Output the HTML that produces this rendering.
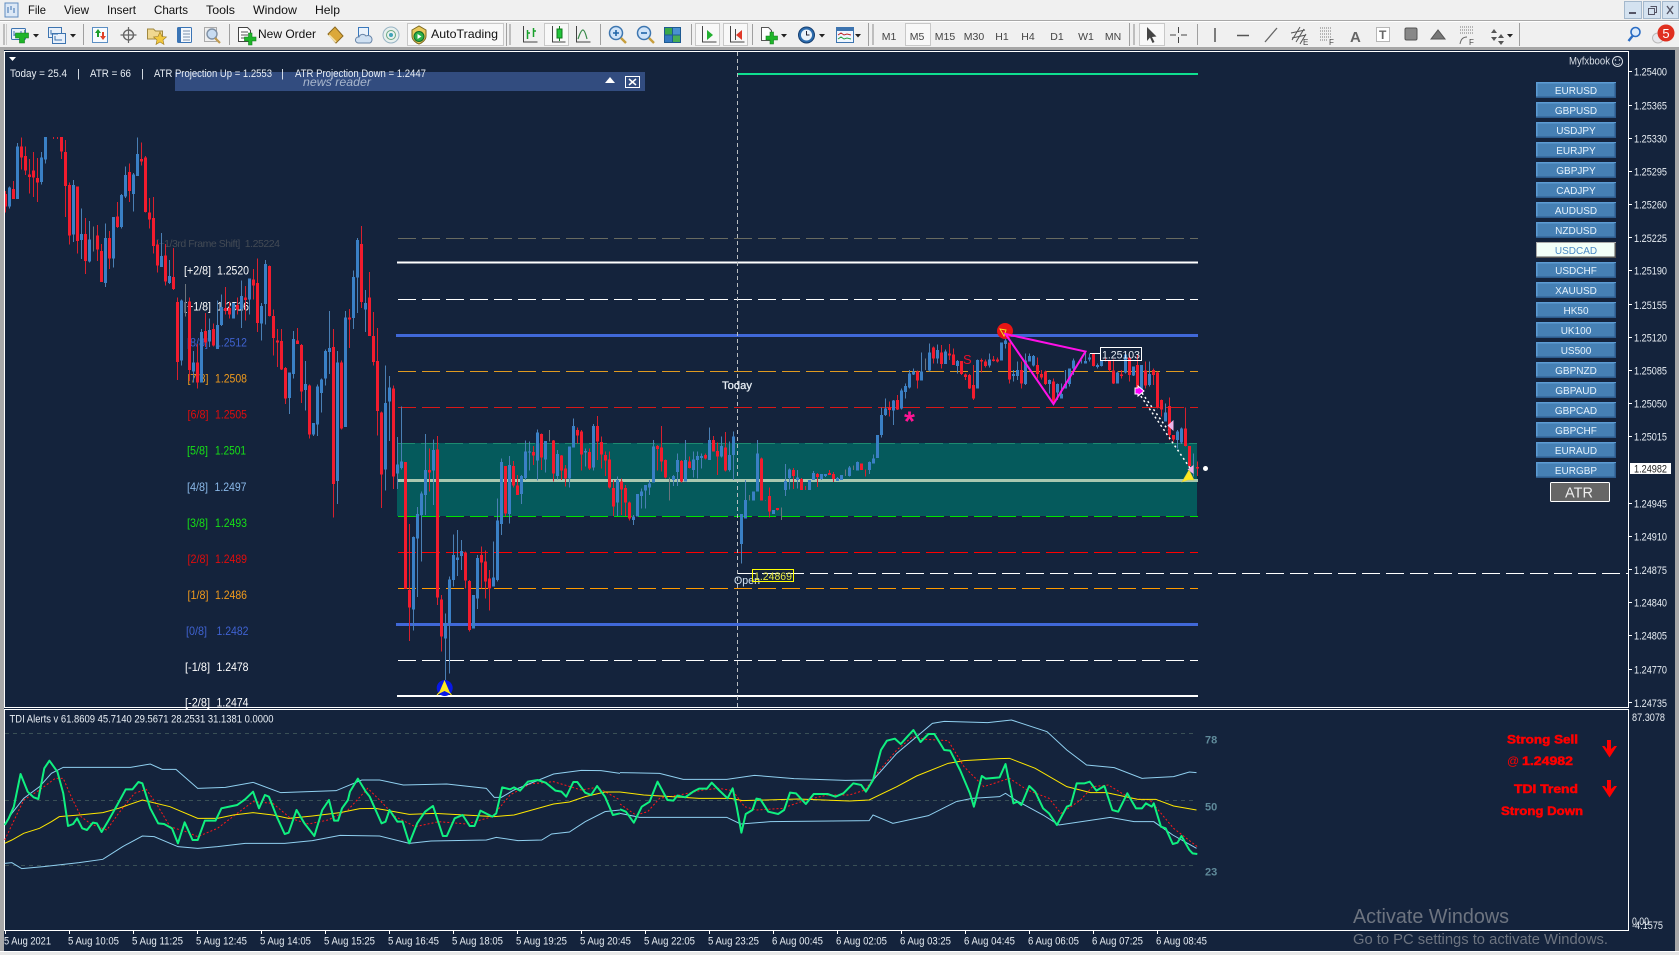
<!DOCTYPE html>
<html><head><meta charset="utf-8"><title>MT4</title>
<style>
html,body{margin:0;padding:0;background:#14233c;width:1679px;height:955px;overflow:hidden}
svg{display:block}
text{font-family:"Liberation Sans",sans-serif}
.m{font-size:12px;fill:#111}
.t{font-size:10.5px;fill:#444;text-anchor:middle}
.a{font-size:11px;fill:#e8eef4}
.x{font-size:11px;fill:#e8eef4}
.b{font-size:10px;fill:#e6f2fc;text-anchor:middle}
.l{font-size:12px}
</style></head><body>
<svg width="1679" height="955" viewBox="0 0 1679 955" xmlns="http://www.w3.org/2000/svg">
<rect width="1679" height="955" fill="#14233c"/>
<!-- chrome -->
<rect width="1679" height="48" fill="#f0f0f0"/>
<rect y="20" width="1679" height="1" fill="#a8a8a8"/>
<rect y="21" width="1679" height="1" fill="#fff"/>
<rect y="47" width="1679" height="3" fill="#a6a6a6"/>
<rect x="0" y="48" width="4" height="907" fill="#a8a8a8"/>
<rect x="1675" y="48" width="4" height="907" fill="#a8a8a8"/>
<rect y="952" width="1679" height="3" fill="#e8e8e8"/>
<rect y="951" width="1679" height="1" fill="#fff"/>
<!-- app icon -->
<rect x="5" y="3" width="13" height="14" fill="#dce8f6" stroke="#5f8cc0"/>
<path d="M8 7v6M11 6v4M14 8v5" stroke="#3b6fb0" fill="none"/>
<!-- menu -->
<text class="m" x="28" y="14" textLength="18" lengthAdjust="spacingAndGlyphs">File</text>
<text class="m" x="64" y="14" textLength="25" lengthAdjust="spacingAndGlyphs">View</text>
<text class="m" x="107" y="14" textLength="29" lengthAdjust="spacingAndGlyphs">Insert</text>
<text class="m" x="154" y="14" textLength="34" lengthAdjust="spacingAndGlyphs">Charts</text>
<text class="m" x="206" y="14" textLength="29" lengthAdjust="spacingAndGlyphs">Tools</text>
<text class="m" x="253" y="14" textLength="44" lengthAdjust="spacingAndGlyphs">Window</text>
<text class="m" x="315" y="14" textLength="25" lengthAdjust="spacingAndGlyphs">Help</text>
<!-- window buttons -->
<g>
<rect x="1624.5" y="1.5" width="17" height="17" fill="#d4e2f0" stroke="#a4b8cc"/>
<rect x="1643.5" y="1.5" width="17" height="17" fill="#d4e2f0" stroke="#a4b8cc"/>
<rect x="1662.5" y="1.5" width="16" height="17" fill="#d4e2f0" stroke="#a4b8cc"/>
<rect x="1629" y="12" width="7" height="2" fill="#556"/>
<path d="M1650.5 6.5h6v6h-2M1648.5 8.5h6v6h-6z" fill="none" stroke="#556"/>
<path d="M1667 6l6 8M1673 6l-6 8" stroke="#556" stroke-width="1.4"/>
</g>
<!-- toolbar grips & separators -->
<g fill="#a8a8a8">
<rect x="3" y="24" width="2" height="21" opacity=".7"/><rect x="6" y="24" width="1" height="21" opacity=".5"/>
<rect x="509" y="24" width="2" height="21" opacity=".7"/>
<rect x="872" y="24" width="2" height="21" opacity=".7"/>
<rect x="1133" y="24" width="2" height="21" opacity=".7"/>
</g>
<g fill="#a0a0a0">
<rect x="83" y="24" width="1" height="21"/><rect x="229" y="24" width="1" height="21"/><rect x="506" y="23" width="1" height="23"/>
<rect x="600" y="24" width="1" height="21"/><rect x="691" y="24" width="1" height="21"/><rect x="752" y="24" width="1" height="21"/>
<rect x="868" y="23" width="1" height="23"/><rect x="1129" y="23" width="1" height="23"/><rect x="1197" y="24" width="1" height="21"/><rect x="1519" y="23" width="1" height="23"/>
</g>
<!-- new chart -->
<g>
<rect x="11.5" y="28.5" width="14" height="11" rx="1" fill="#e8f0fa" stroke="#3d74b0"/>
<path d="M14 31v5M14 35h8M21 31v4" stroke="#3d74b0" fill="none"/>
<path d="M19.5 33h5v-3h0v3h4v5h-4v5h-5v-5h-4v-5h4z" fill="#1fb52a" stroke="#0f7a1c" stroke-width=".6"/>
<path d="M33 34h6l-3 3.5z" fill="#222"/>
<rect x="48.5" y="27.5" width="13" height="10" fill="#e8f0fa" stroke="#3d74b0"/>
<rect x="52.5" y="33.5" width="13" height="10" fill="#e8f0fa" stroke="#3d74b0"/>
<path d="M51 30v4h7M55 36v4h7" fill="none" stroke="#3d74b0"/>
<path d="M70 34h6l-3 3.5z" fill="#222"/>
<!-- market watch -->
<rect x="92.5" y="27.5" width="15" height="15" fill="#f8fbff" stroke="#5c8fc4"/>
<path d="M97 37v-4h-2l3-4 3 4h-2v4z" fill="#1c9e2c"/><path d="M102 32v4h-2l3 4 3-4h-2v-4z" fill="#e04028"/>
<!-- crosshair -->
<circle cx="128.5" cy="35" r="5" fill="none" stroke="#666" stroke-width="1.4"/>
<path d="M128.5 27v16M120.5 35h16" stroke="#666" stroke-width="1.2"/>
<!-- folder star -->
<path d="M147.500 29h6l2 2h7v8h-15z" fill="#f0d890" stroke="#a08840"/>
<path d="M160 32l2 4.500 4.500.5-3.500 3 1 4.500-4-2.500-4 2.500 1-4.500-3.500-3 4.500-.5z" fill="#f2c83e" stroke="#9c7a20" stroke-width=".6"/>
<!-- terminal -->
<rect x="177.500" y="27.500" width="14" height="15" rx="1" fill="#f4f8fd" stroke="#3a74b5"/>
<rect x="178" y="28" width="3" height="14" fill="#3a74b5"/>
<path d="M183 31h7M183 34h7M183 37h7M183 40h7" stroke="#7a90aa"/>
<!-- strategy tester -->
<rect x="204.500" y="27.500" width="12" height="14" fill="#eee" stroke="#aaa"/>
<circle cx="212" cy="34" r="5" fill="#c8dcf2" stroke="#7f90a4" stroke-width="1.4"/>
<path d="M215 38l5 5" stroke="#c09a50" stroke-width="2.2"/>
<!-- new order -->
<path d="M238.500 27.500h9l3 3v11h-12z" fill="#fff" stroke="#444"/>
<path d="M241 32h7M241 35h7M241 38h4" stroke="#555"/>
<path d="M247.500 36h3.500v4h4v4h-4v4h-3.500v-4h-4v-4h4z" transform="translate(1,-3)" fill="#1fb52a" stroke="#0f7a1c" stroke-width=".6"/>
<text x="258" y="38" font-size="12" fill="#111" textLength="58" lengthAdjust="spacingAndGlyphs">New Order</text>
<!-- gold book -->
<path d="M335 27l8 9-7 7-8-9z" fill="#dba83a" stroke="#8d6a20"/>
<path d="M329 35l7 7" stroke="#f3e0a8" stroke-width="1.6"/>
<!-- cloud doc -->
<rect x="358.500" y="27.500" width="10" height="10" fill="#eaf2fb" stroke="#3a78bc"/>
<path d="M358 43a3 3 0 0 1 1-6 4 4 0 0 1 7-1 3.500 3.500 0 0 1 4 7z" fill="#cfe0f2" stroke="#6a86a8"/>
<!-- signals -->
<circle cx="391" cy="35" r="8" fill="#e8f0ee" stroke="#98b4c4"/>
<circle cx="391" cy="35" r="4.500" fill="none" stroke="#6aa880"/>
<circle cx="391" cy="35" r="2" fill="#3fa3b8"/>
<!-- autotrading -->
<rect x="407.500" y="23.500" width="96" height="22" fill="#f8f8f8" stroke="#c8c8c8"/>
<path d="M412 30l7-4 7 4v6c0 4-4 7-7 8-3-1-7-4-7-8z" fill="#e8c85a" stroke="#7d6a22"/>
<circle cx="419" cy="36.500" r="5" fill="#2db04a" stroke="#126a28"/>
<path d="M417.500 34l4 2.500-4 2.500z" fill="#fff"/>
<text x="431" y="38" font-size="12" fill="#111" textLength="67" lengthAdjust="spacingAndGlyphs">AutoTrading</text>
<!-- chart types -->
<rect x="544.500" y="23.500" width="24" height="22" fill="#f8f8f8" stroke="#c8c8c8"/>
<g fill="none" stroke="#444">
<path d="M523.500 26v16h14M576.500 26v16h14M552.500 26v16h13" stroke-width="1"/>
<path d="M527.500 30v9M530 33h-2.500M533.500 28v9M533.500 31h2.500" stroke="#17a02a" stroke-width="1.500"/>
<path d="M578 39c4-12 6-12 9 0" stroke="#3a8a4a" stroke-width="1.200"/>
</g>
<rect x="557" y="29" width="5" height="9" fill="#22c33a" stroke="#0f7a1c"/>
<path d="M559.500 26v3M559.500 38v3" stroke="#0f7a1c"/>
<!-- zoom -->
<circle cx="616" cy="33" r="6.500" fill="#cfe3f8" stroke="#3d76b0" stroke-width="1.500"/>
<path d="M613 33h6M616 30v6" stroke="#1e64a8" stroke-width="1.600"/>
<path d="M621 38l5 5" stroke="#c79e3c" stroke-width="2.400"/>
<circle cx="644" cy="33" r="6.500" fill="#cfe3f8" stroke="#3d76b0" stroke-width="1.500"/>
<path d="M641 33h6" stroke="#1e64a8" stroke-width="1.600"/>
<path d="M649 38l5 5" stroke="#c79e3c" stroke-width="2.400"/>
<!-- tile -->
<rect x="664.500" y="27.500" width="16" height="7.500" fill="#3aa84a" stroke="#1e5a92"/>
<rect x="664.500" y="35" width="16" height="7.500" fill="#3579c0" stroke="#1e5a92"/>
<path d="M672.500 27v15" stroke="#1e5a92"/><rect x="673" y="28" width="7" height="6.500" fill="#4a90d0"/><rect x="673" y="35.500" width="7" height="6.500" fill="#48ad55"/>
<!-- autoscroll / shift -->
<rect x="695.500" y="23.500" width="24" height="22" fill="#f8f8f8" stroke="#c8c8c8"/>
<rect x="723.500" y="23.500" width="24" height="22" fill="#f8f8f8" stroke="#c8c8c8"/>
<path d="M702.500 26v16h14M730.500 26v16h14" fill="none" stroke="#444"/>
<path d="M707 30l6 5-6 5z" fill="#22b030"/><path d="M742 30l-6 5 6 5z" fill="#e03828"/><path d="M735.500 29v11" stroke="#444"/>
<!-- indicators -->
<path d="M761.500 27.500h7l3 3v10h-10z" fill="#fff" stroke="#555"/>
<path d="M770 35h3.500v4h4v4h-4v4h-3.500v-4h-4v-4h4z" transform="translate(0,-3)" fill="#1fb52a" stroke="#0f7a1c" stroke-width=".6"/>
<path d="M781 34h6l-3 3.500z" fill="#222"/>
<!-- clock -->
<circle cx="806.500" cy="35" r="8" fill="#2c6cae" stroke="#173f70"/>
<circle cx="806.500" cy="35" r="5.500" fill="#eaf2fa"/>
<path d="M806.500 31v4h3" stroke="#223" fill="none"/>
<path d="M819 34h6l-3 3.500z" fill="#222"/>
<!-- templates -->
<rect x="836.500" y="27.500" width="17" height="15" fill="#eef6ff" stroke="#3d74b0"/>
<rect x="837" y="28" width="16" height="3" fill="#3d74b0"/>
<path d="M838 35l3-2 3 2 3-1 4 1" stroke="#c02828" fill="none"/><path d="M838 39l3-2 3 2 3-1 4 1" stroke="#28a040" fill="none"/>
<path d="M855 34h6l-3 3.500z" fill="#222"/>
<!-- timeframes -->
<rect x="905.500" y="23.500" width="25" height="22" fill="#f8f8f8" stroke="#c8c8c8"/>
<text class="t" x="889" y="40">M1</text><text class="t" x="917" y="40">M5</text><text class="t" x="945" y="40">M15</text><text class="t" x="974" y="40">M30</text>
<text class="t" x="1002" y="40">H1</text><text class="t" x="1028" y="40">H4</text><text class="t" x="1057" y="40">D1</text><text class="t" x="1086" y="40">W1</text><text class="t" x="1113" y="40">MN</text>
<!-- draw tools -->
<rect x="1139.500" y="23.500" width="25" height="22" fill="#f8f8f8" stroke="#c8c8c8"/>
<path d="M1147 27l0 14 3-3.500 2.500 5.500 2-1-2.500-5 4.500-.5z" fill="#444"/>
<path d="M1178.500 27v6M1178.500 37v6M1170 35h6M1181 35h6" stroke="#444"/>
<path d="M1215 28v14" stroke="#555" stroke-width="1.500"/>
<path d="M1237 35.500h12" stroke="#555" stroke-width="1.500"/>
<path d="M1265 42l12-14" stroke="#666" stroke-width="1.300"/>
<g fill="none" stroke="#555"><path d="M1292 40l8-13M1296 42l8-13M1300 44l6-10M1291 33l14-3M1292 38l14-3"/></g>
<text x="1303" y="45" font-size="8" fill="#444">E</text>
<path d="M1320 28h12M1320 31h12M1320 34h12M1320 37h12" stroke="#777" stroke-dasharray="1 1"/><path d="M1320 40h8" stroke="#777" stroke-dasharray="1 1"/>
<text x="1329" y="45" font-size="8" fill="#444">F</text>
<text x="1350" y="42" font-size="15" font-weight="bold" fill="#666">A</text>
<rect x="1376.500" y="27.500" width="13" height="14" fill="#fff" stroke="#777" stroke-dasharray="1 1"/>
<text x="1379" y="39" font-size="12" font-weight="bold" fill="#666">T</text>
<rect x="1405" y="28" width="12" height="12" rx="1.500" fill="#888" stroke="#555"/>
<path d="M1431 39l7-9 7 9z" fill="#777" stroke="#555"/>
<path d="M1460 27h14M1460 30h14M1460 33h14" stroke="#777" stroke-dasharray="1 1"/><path d="M1460 44c1-5 3-7 7-7" stroke="#666" fill="none"/>
<text x="1469" y="45" font-size="8" fill="#444">F</text>
<path d="M1491 33l3-4 3 4zM1491 37l3 4 3-4zM1498 38l3-4 3 4zM1498 41l3 4 3-4z" fill="#555"/>
<path d="M1507 34h6l-3 3.500z" fill="#222"/>
<!-- search, notify -->
<circle cx="1635.500" cy="32" r="4.500" fill="#dbeafa" stroke="#2a6cc4" stroke-width="1.600"/>
<path d="M1632.500 36l-4 5" stroke="#2a6cc4" stroke-width="2.400"/>
<ellipse cx="1658" cy="38" rx="5.500" ry="5" fill="#e8e8ec" stroke="#bbb"/>
<circle cx="1666" cy="33" r="8.500" fill="#e03020"/>
<text x="1666" y="38" font-size="13" fill="#fff" text-anchor="middle">5</text>

<!-- CHART -->
<rect x="397" y="443" width="800" height="73" fill="#055a5c"/>
<path d="M397 443.500H1197" stroke="#1c8a70" stroke-dasharray="18 6"/>
<path d="M738 74H1198" stroke="#0fe090" stroke-width="2"/>
<g fill="none">
<path d="M398 238.500H1198" stroke="#686a60" stroke-dasharray="18 6"/>
<path d="M397 262.500H1198" stroke="#fff" stroke-width="2"/>
<path d="M398 299.500H1198" stroke="#fff" stroke-dasharray="18 6"/>
<path d="M396 335.500H1198" stroke="#4068d8" stroke-width="3"/>
<path d="M398 371.500H1198" stroke="#e09a20" stroke-dasharray="18 6"/>
<path d="M398 407.500H1198" stroke="#d81818" stroke-dasharray="18 6"/>
<path d="M397 480.500H1198" stroke="#a8c8b0" stroke-width="3"/>
<path d="M398 516.500H1198" stroke="#00e000" stroke-width="1" stroke-dasharray="18 6"/>
<path d="M398 552.500H1198" stroke="#ff0000" stroke-dasharray="18 6"/>
<path d="M398 588.500H1198" stroke="#ff9a00" stroke-dasharray="18 6"/>
<path d="M396 624.500H1198" stroke="#4068d8" stroke-width="3"/>
<path d="M398 660.500H1198" stroke="#fff" stroke-dasharray="18 6"/>
<path d="M397 696H1198" stroke="#fff" stroke-width="2"/>
<path d="M738 573.500H1628" stroke="#fff" stroke-dasharray="18 6"/>
<path d="M737.500 52V707" stroke="#b8bcc0" stroke-dasharray="4 3"/>
</g>
<!-- labels left -->
<g class="l">
<text x="156" y="247" font-size="10.500" fill="#444b55" textLength="124" lengthAdjust="spacing">[+1/3rd Frame Shift]&#160; 1.25224</text>
<g font-size="12">
<text x="184" y="274.500" fill="#fff" textLength="27" lengthAdjust="spacingAndGlyphs">[+2/8]</text><text x="217" y="274.500" fill="#fff" textLength="32" lengthAdjust="spacingAndGlyphs">1.2520</text>
<text x="184" y="310.500" fill="#fff" textLength="27" lengthAdjust="spacingAndGlyphs">[+1/8]</text><text x="217" y="310.500" fill="#fff" textLength="32" lengthAdjust="spacingAndGlyphs">1.2516</text>
<text x="187" y="346.500" fill="#3f62d0" textLength="21" lengthAdjust="spacingAndGlyphs">[8/8]</text><text x="215" y="346.500" fill="#3f62d0" textLength="32" lengthAdjust="spacingAndGlyphs">1.2512</text>
<text x="187.500" y="382.500" fill="#f09a1c" textLength="21" lengthAdjust="spacingAndGlyphs">[7/8]</text><text x="215" y="382.500" fill="#f09a1c" textLength="32" lengthAdjust="spacingAndGlyphs">1.2508</text>
<text x="187.500" y="418.500" fill="#e00c0c" textLength="21" lengthAdjust="spacingAndGlyphs">[6/8]</text><text x="215" y="418.500" fill="#e00c0c" textLength="32" lengthAdjust="spacingAndGlyphs">1.2505</text>
<text x="187" y="454.500" fill="#16e016" textLength="21" lengthAdjust="spacingAndGlyphs">[5/8]</text><text x="215" y="454.500" fill="#16e016" textLength="31" lengthAdjust="spacingAndGlyphs">1.2501</text>
<text x="187" y="491" fill="#8ab8e8" textLength="21" lengthAdjust="spacingAndGlyphs">[4/8]</text><text x="214.500" y="491" fill="#8ab8e8" textLength="32" lengthAdjust="spacingAndGlyphs">1.2497</text>
<text x="187" y="527" fill="#16e016" textLength="21" lengthAdjust="spacingAndGlyphs">[3/8]</text><text x="215" y="527" fill="#16e016" textLength="32" lengthAdjust="spacingAndGlyphs">1.2493</text>
<text x="187.500" y="563" fill="#e00c0c" textLength="21" lengthAdjust="spacingAndGlyphs">[2/8]</text><text x="215" y="563" fill="#e00c0c" textLength="32" lengthAdjust="spacingAndGlyphs">1.2489</text>
<text x="187.500" y="599" fill="#f09a1c" textLength="21" lengthAdjust="spacingAndGlyphs">[1/8]</text><text x="215" y="599" fill="#f09a1c" textLength="32" lengthAdjust="spacingAndGlyphs">1.2486</text>
<text x="186" y="635" fill="#3f62d0" textLength="21" lengthAdjust="spacingAndGlyphs">[0/8]</text><text x="216.500" y="635" fill="#3f62d0" textLength="32" lengthAdjust="spacingAndGlyphs">1.2482</text>
<text x="185" y="671" fill="#fff" textLength="25" lengthAdjust="spacingAndGlyphs">[-1/8]</text><text x="216.500" y="671" fill="#fff" textLength="32" lengthAdjust="spacingAndGlyphs">1.2478</text>
<text x="185" y="706.500" fill="#fff" textLength="25" lengthAdjust="spacingAndGlyphs">[-2/8]</text><text x="216.500" y="706.500" fill="#fff" textLength="32" lengthAdjust="spacingAndGlyphs">1.2474</text>
</g></g>

<!-- candles group 1 (zoom3 coords) -->
<svg x="0" y="52" width="1628" height="655" viewBox="0 52 1628 655">
<g transform="translate(.17,110) scale(.33333,.38265)" fill="none" shape-rendering="crispEdges">
<path stroke="#d8202e" stroke-width="3" d="M16 212V268M40 186V232M64 72V155M76 95V170M88 128V218M100 110V228M112 125V240M160 70V76M172 70V76M184 70V128M196 78V280M208 190V352M232 200V375M256 282V428M292 300V395M304 350V450M328 316V415M352 240V308M388 140V240M424 85V145M436 120V268M448 230V310M460 228V375M472 340V425M496 350V458M520 360V470M532 490V706M568 490V708M592 612V728M616 530V620M640 558V618M676 462V535M688 500V545M712 490V535M736 460V550M760 415V495M772 388V580M808 406V540M820 522V642M832 572V672M844 572V680M856 672V768M892 570V612M904 612V766M928 718V858M1000 572V1065M1024 655V835M1048 520V622M1084 303V518M1108 423V590M1120 528V668M1132 570V850M1144 788V1040M1180 720V990M1228 1082V1388"/>
<path stroke="#4a7fb4" stroke-width="3" d="M28 200V258M52 86V232M124 110V195M136 70V140M220 183V345M244 258V390M268 290V398M316 296V462M340 280V412M364 220V310M376 148V230M400 165V265M412 72V172M484 322V410M508 392V455M544 495V668M580 630V712M604 572V712M628 545V620M652 498V625M664 482V565M700 505V545M724 445V570M748 440V535M784 505V603M796 392V560M868 686V795M880 578V702M916 656V785M940 818V852M952 718V852M964 702V790M976 626V720M988 525V690M1012 630V1030M1036 525V828M1060 420V572M1072 335V530M1096 470V580M1156 668V995M1168 695V865M1192 855V990M1204 775V940M1240 1115V1360M1252 1038V1273"/>
<path stroke="#6c747c" stroke-width="3" d="M280 304V370M556 455V540"/>
<path stroke="#f21c2e" stroke-width="9" d="M16 220V252M40 206V232M64 95V124M76 120V158M88 168V175M100 158V176M112 178V190M184 70V108M196 110V198M208 196V328M232 200V342M256 324V395M292 328V365M304 368V450M328 335V388M352 278V306M388 162V212M424 128V135M436 124V266M448 268V286M460 282V356M472 352V406M496 380V448M520 437V468M532 502V658M568 500V680M592 660V712M616 578V608M640 572V616M676 518V525M688 518V535M712 510V522M736 490V496M760 443V458M772 452V556M808 408V538M820 538V596M832 603V608M844 604V678M856 674V754M892 602V611M904 614V736M928 720V848M1000 620V978M1024 660V832M1048 542V548M1084 350V502M1108 490V590M1120 590V658M1132 656V786M1144 790V952M1180 728V958M1216 920V1252M1228 1255V1300"/>
<path stroke="#3a80c6" stroke-width="9" d="M28 202V252M52 95V232M124 124V188M136 70V130M220 196V326M244 324V340M268 338V396M316 335V452M340 280V388M364 222V306M376 170V226M400 168V220M412 115V172M484 382V410M508 434V452M544 498V655M580 660V684M604 580V712M628 575V605M652 562V625M664 515V562M700 505V545M724 486V522M748 440V495M784 512V558M796 402V507M868 686V752M880 598V690M916 716V732M940 818V848M952 722V822M964 704V740M976 630V702M988 622V632M1012 660V970M1036 542V828M1060 436V544M1072 340V438M1096 505V522M1156 766V940M1168 725V762M1192 926V950M1204 918V936M1240 1116V1306M1252 1056V1120"/>
</g>
<!-- candles group 2 (zoom4 coords) -->
<g transform="translate(380.17,400) scale(.33333)" fill="none" shape-rendering="crispEdges">
<path stroke="#d8202e" stroke-width="3" d="M148 145V275M172 108V615M184 585V755M256 455V565M268 540V695M304 440V565M316 452V595M328 510V632M376 198V350M400 183V262M412 225V285M460 138V195M484 100V210M520 120V245M544 165V240M556 195V260M592 82V130M604 90V212M628 145V210M652 48V180M664 110V205M676 155V228M688 155V265M700 240V348M724 235V345M736 255V348M748 305V362M832 135V212M844 78V215M856 178V235M904 180V248M928 170V206M976 160V178M1000 108V155M1012 128V225M1036 96V215M1144 172V302M1168 262V352M1192 324V332"/>
<path stroke="#4a7fb4" stroke-width="3" d="M124 275V485M136 102V345M160 118V315M196 640V840M208 530V820M220 403V560M232 390V528M244 420V510M280 585V686M292 465V627M340 425V560M352 295V545M364 175V405M388 168V370M424 225V312M436 122V240M448 125V212M472 88V242M496 125V218M532 150V238M568 140V263M580 55V143M616 145V200M640 72V212M712 230V348M760 345V375M772 282V350M784 265V325M796 255V325M808 240V285M820 120V248M880 225V258M892 160V258M916 120V245M940 155V232M952 155V235M964 160V205M988 82V180M1024 110V172M1048 125V215M1060 95V240M1084 342V490M1096 240V356M1120 274V302M1132 120V275M1180 330V342M1216 192V288M1228 205V268M1252 210V265"/>
<path stroke="#6c747c" stroke-width="3" d="M508 90V125M868 232V302M1108 285V302M1156 300V302M1204 322V360"/>
<path stroke="#f21c2e" stroke-width="9" d="M148 210V218M172 148V592M184 598V710M256 458V542M268 543V690M304 465V488M316 484V545M328 535V565M376 198V340M400 198V257M412 256V285M460 156V166M484 102V172M520 122V220M544 166V212M556 205V235M592 90V106M604 94V164M628 156V206M652 78V125M664 126V164M676 165V182M688 178V263M700 264V320M724 244V268M736 264V308M748 307V355M832 138V147M844 142V185M856 180V233M904 183V245M928 184V204M976 165V176M1000 120V155M1012 153V170M1036 142V212M1144 175V302M1168 288V335M1192 324V330"/>
<path stroke="#3a80c6" stroke-width="9" d="M124 280V345M136 210V285M160 150V212M196 670V716M208 538V670M220 465V540M232 472V480M244 453V468M280 585V686M292 474V595M340 532V560M352 362V540M364 186V372M388 195V342M424 228V282M436 155V234M448 155V158M472 98V182M496 123V178M532 162V228M568 140V236M580 78V143M616 153V158M640 78V203M712 240V308M760 350V360M772 282V350M784 274V288M796 255V272M808 250V262M820 140V248M880 228V240M892 180V216M916 180V245M940 178V210M952 168V180M964 168V174M988 120V180M1024 138V170M1048 165V210M1060 110V165M1084 342V432M1096 300V356M1120 274V302M1132 160V275M1180 330V342M1216 243V270M1228 208V234M1252 232V240"/>
</g>
<!-- candles group 3 (true px) -->
<g fill="none" shape-rendering="crispEdges">
<path stroke="#d8202e" d="M793.500 468V489M801.500 478V490M805.500 486V490M817.500 473V487M829.500 470V475M833.500 472V482"/>
<path stroke="#4a7fb4" d="M813.500 471V480M821.500 474V480M825.500 474V477M837.500 477V481"/>
<path stroke="#f21c2e" stroke-width="3" d="M793.500 470V476M801.500 479V490M817.500 474V477M829.500 473V475M833.500 474V479"/>
<path stroke="#3a80c6" stroke-width="3" d="M809.500 480V490M813.500 473V480M821.500 474V479M825.500 474V476M837.500 478V481"/>
</g>
<!-- candles group 4 (zoom5 coords) -->
<g transform="translate(840.17,320) scale(.33333)" fill="none" shape-rendering="crispEdges">
<path stroke="#d8202e" stroke-width="3" d="M64 430V450M76 448V470M148 245V290M172 225V270M232 152V205M280 80V130M304 75V145M328 72V120M340 85V135M364 125V165M376 160V180M388 162V207M400 135V240M424 115V158M436 118V142M460 108V125M472 112V128M508 68V190M544 125V205M592 112V175M604 150V178M616 152V195M640 175V252M760 100V140M796 115V125M808 120V155M820 118V192M844 150V175M868 100V185M892 105V205M916 125V205M940 145V195M952 155V265M964 238V290M988 232V360M1000 345V365M1036 262V380M1048 378V440M1072 425V468"/>
<path stroke="#4a7fb4" stroke-width="3" d="M4 465V480M28 438V470M52 425V452M88 425V462M100 403V430M112 345V414M124 262V352M136 235V288M160 240V315M184 205V268M196 190V235M208 150V205M220 145V165M244 98V155M268 70V155M292 73V130M316 88V132M352 120V160M412 118V205M448 100V142M484 68V122M496 55V85M520 150V185M532 125V180M556 100V195M568 100V125M580 105V140M628 178V220M652 190V240M664 190V235M676 150V200M688 145V200M700 115V165M724 120V130M736 95V130M748 100V125M772 130V145M784 120V140M832 155V190M856 100V160M880 140V168M904 135V215M928 125V200M976 250V305M1012 330V385M1024 322V372M1060 400V470"/>
<path stroke="#6c747c" stroke-width="3" d="M16 448V468M40 437V450M256 115V150"/>
<path stroke="#f21c2e" stroke-width="9" d="M64 430V450M148 262V270M172 240V268M232 155V182M280 82V116M304 97V132M328 100V107M340 103V135M364 123V162M376 163V171M388 165V206M400 195V235M424 120V125M436 124V138M460 118V123M472 118V124M508 68V178M544 150V190M592 135V162M604 162V172M616 155V192M640 184V245M760 102V138M796 120V122M808 122V150M820 152V190M844 163V168M868 112V165M892 135V205M916 152V197M940 150V165M952 158V262M964 240V268M988 258V345M1000 345V358M1036 325V378M1048 378V438M1072 441V445"/>
<path stroke="#3a80c6" stroke-width="9" d="M4 465V480M28 442V468M52 426V452M88 426V450M100 416V430M112 345V414M124 285V345M136 265V285M160 242V272M184 212V266M196 198V216M208 160V202M220 155V163M244 155V182M268 97V152M292 90V115M316 95V132M352 123V138M412 120V205M448 118V136M484 68V122M496 62V72M520 162V168M532 150V168M556 122V192M568 108V124M580 108V136M628 180V192M652 192V218M664 222V235M676 192V205M688 145V192M700 122V145M736 123V130M748 112V118M772 135V141M784 122V138M832 158V190M856 103V158M880 140V166M904 135V215M928 162V195M976 278V305M1012 334V360M1024 325V368"/>
</g>
</svg>

<!-- objects on chart -->
<text x="722" y="389" font-size="11" fill="#e8eef4" stroke="#e8eef4" stroke-width=".25" textLength="30" lengthAdjust="spacingAndGlyphs">Today</text>
<g>
<text x="734" y="584" font-size="11" fill="#d0e0f0" textLength="26" lengthAdjust="spacingAndGlyphs">Open</text>
<rect x="752.500" y="569.500" width="41" height="12" fill="none" stroke="#ffff00"/>
<text x="754" y="580" font-size="11" fill="#e8e840" textLength="38" lengthAdjust="spacingAndGlyphs">1.24869</text>
</g>
<path d="M1090 353.500h10" stroke="#fff"/>
<rect x="1100.500" y="347.500" width="41" height="13" fill="none" stroke="#fff"/>
<text x="1102" y="358.500" font-size="11" fill="#e8eef4" textLength="38" lengthAdjust="spacingAndGlyphs">1.25103</text>
<text x="963" y="364" font-size="13" fill="#e8102a">S</text>
<text x="904" y="430.500" font-size="28" font-weight="bold" fill="#ff1493">*</text>
<circle cx="1005" cy="331" r="8" fill="#e81414"/>
<path d="M1000 329l6 1-2 6z" fill="none" stroke="#f0e020" stroke-width="1"/>
<path d="M1005.500 334L1085.500 351.500L1053.500 404Z" fill="none" stroke="#ff10e8" stroke-width="2"/>
<path d="M1138 392L1190 468M1142 393L1168 430" stroke="#fff" stroke-width="1.500" stroke-dasharray="2 3" fill="none"/>
<path d="M1135 388h3v-2l6 5-6 5v-2h-3z" fill="#ff00ff" stroke="#fff"/>
<path d="M1173.500 420v11l-6-5.500z" fill="#f0b4e8"/>
<path d="M1193.500 465v9l-6-4.500z" fill="#f0b4e8"/>
<path d="M1189 470l5 10h-6l-6 2z" fill="#ffe820" stroke="#d8d040" stroke-width=".6"/>
<circle cx="1205.500" cy="468.500" r="2.500" fill="#fff"/>
<circle cx="444.700" cy="688" r="8" fill="#0818e8"/>
<path d="M444.500 680l6 14-6-3-6 3z" fill="#ffe820"/>
<path d="M437 695l7.500-8 7 8" fill="none" stroke="#ffe820"/>

<!-- header texts -->
<path d="M9 57h7l-3.500 4z" fill="#fff"/>
<rect x="175" y="72" width="470" height="19" fill="#324c7f"/>
<text x="303" y="86" font-size="12" font-style="italic" fill="#a8b6cc" textLength="68" lengthAdjust="spacingAndGlyphs">news reader</text>
<path d="M605 83h10l-5-6z" fill="#fff"/>
<rect x="625.500" y="76.500" width="14" height="11" fill="#324c7f" stroke="#fff"/>
<path d="M629 79l7 6M636 79l-7 6" stroke="#fff" stroke-width="1.500"/>
<g class="a">
<text class="a" x="10" y="77" textLength="57" lengthAdjust="spacingAndGlyphs">Today = 25.4</text>
<text class="a" x="77" y="77">|</text>
<text class="a" x="90" y="77" textLength="41" lengthAdjust="spacingAndGlyphs">ATR = 66</text>
<text class="a" x="141" y="77">|</text>
<text class="a" x="154" y="77" textLength="118" lengthAdjust="spacingAndGlyphs">ATR Projection Up = 1.2553</text>
<text class="a" x="281" y="77">|</text>
<text class="a" x="295" y="77" textLength="131" lengthAdjust="spacingAndGlyphs">ATR Projection Down = 1.2447</text>
</g>
<text x="1569" y="64.500" font-size="11" fill="#d8dee6" textLength="41" lengthAdjust="spacingAndGlyphs">Myfxbook</text>
<circle cx="1617.500" cy="61.500" r="5" fill="none" stroke="#d8dee6"/>
<circle cx="1615.500" cy="60" r=".8" fill="#d8dee6"/><circle cx="1619.500" cy="60" r=".8" fill="#d8dee6"/>
<path d="M1615 63.500c1.500 1.500 3.500 1.500 5 0" fill="none" stroke="#d8dee6" stroke-width=".8"/>

<!-- frames -->
<g fill="none" stroke="#fff">
<rect x="4.500" y="51.500" width="1624" height="656"/>
<rect x="4.500" y="709.500" width="1624" height="221"/>
</g>

<!-- symbol buttons -->
<defs>
<g id="btn"><rect width="80" height="16" fill="#4680b4"/><path d="M0 0h80v1.500H1.500V16H0z" fill="#5c9cd4"/><path d="M80 16H0v-1.500h78.500V1h1.500z" fill="#2d5c8e"/></g>
</defs>
<use href="#btn" x="1536" y="82"/><use href="#btn" x="1536" y="102"/><use href="#btn" x="1536" y="122"/><use href="#btn" x="1536" y="142"/><use href="#btn" x="1536" y="162"/><use href="#btn" x="1536" y="182"/><use href="#btn" x="1536" y="202"/><use href="#btn" x="1536" y="222"/>
<use href="#btn" x="1536" y="262"/><use href="#btn" x="1536" y="282"/><use href="#btn" x="1536" y="302"/><use href="#btn" x="1536" y="322"/><use href="#btn" x="1536" y="342"/><use href="#btn" x="1536" y="362"/><use href="#btn" x="1536" y="382"/><use href="#btn" x="1536" y="402"/><use href="#btn" x="1536" y="422"/><use href="#btn" x="1536" y="442"/><use href="#btn" x="1536" y="462"/>
<rect x="1536" y="242" width="80" height="16" fill="#f2fff8"/><path d="M1536 242h80v1h-80zM1536 242h1v16h-1z" fill="#aaa"/><path d="M1616 258h-80v-1.500h78.500V243h1.500z" fill="#555"/>
<text class="b" x="1576" y="94">EURUSD</text><text class="b" x="1576" y="114">GBPUSD</text><text class="b" x="1576" y="134">USDJPY</text><text class="b" x="1576" y="154">EURJPY</text><text class="b" x="1576" y="174">GBPJPY</text><text class="b" x="1576" y="194">CADJPY</text><text class="b" x="1576" y="214">AUDUSD</text><text class="b" x="1576" y="234">NZDUSD</text>
<text class="b" x="1576" y="254" style="fill:#4a8ac4">USDCAD</text>
<text class="b" x="1576" y="274">USDCHF</text><text class="b" x="1576" y="294">XAUUSD</text><text class="b" x="1576" y="314">HK50</text><text class="b" x="1576" y="334">UK100</text><text class="b" x="1576" y="354">US500</text><text class="b" x="1576" y="374">GBPNZD</text><text class="b" x="1576" y="394">GBPAUD</text><text class="b" x="1576" y="414">GBPCAD</text><text class="b" x="1576" y="434">GBPCHF</text><text class="b" x="1576" y="454">EURAUD</text><text class="b" x="1576" y="474">EURGBP</text>
<rect x="1550.500" y="482.500" width="59" height="19" rx="1" fill="#666" stroke="#fff"/>
<text x="1579" y="497.500" font-size="14.500" fill="#eee" text-anchor="middle">ATR</text>

<!-- price axis -->
<path d="M1628 71.500h4M1628 105.500h4M1628 138.500h4M1628 171.500h4M1628 204.500h4M1628 237.500h4M1628 270.500h4M1628 304.500h4M1628 337.500h4M1628 370.500h4M1628 403.500h4M1628 436.500h4M1628 503.500h4M1628 536.500h4M1628 569.500h4M1628 602.500h4M1628 635.500h4M1628 669.500h4M1628 702.500h4" stroke="#fff"/>
<g>
<text class="x" x="1634" y="75.500" textLength="33" lengthAdjust="spacingAndGlyphs">1.25400</text>
<text class="x" x="1634" y="109.500" textLength="33" lengthAdjust="spacingAndGlyphs">1.25365</text>
<text class="x" x="1634" y="142.500" textLength="33" lengthAdjust="spacingAndGlyphs">1.25330</text>
<text class="x" x="1634" y="175.500" textLength="33" lengthAdjust="spacingAndGlyphs">1.25295</text>
<text class="x" x="1634" y="208.500" textLength="33" lengthAdjust="spacingAndGlyphs">1.25260</text>
<text class="x" x="1634" y="242" textLength="33" lengthAdjust="spacingAndGlyphs">1.25225</text>
<text class="x" x="1634" y="274.500" textLength="33" lengthAdjust="spacingAndGlyphs">1.25190</text>
<text class="x" x="1634" y="309" textLength="33" lengthAdjust="spacingAndGlyphs">1.25155</text>
<text class="x" x="1634" y="341.500" textLength="33" lengthAdjust="spacingAndGlyphs">1.25120</text>
<text class="x" x="1634" y="374.500" textLength="33" lengthAdjust="spacingAndGlyphs">1.25085</text>
<text class="x" x="1634" y="407.500" textLength="33" lengthAdjust="spacingAndGlyphs">1.25050</text>
<text class="x" x="1634" y="440.500" textLength="33" lengthAdjust="spacingAndGlyphs">1.25015</text>
<rect x="1630" y="463" width="41" height="11" fill="#fff"/>
<text x="1634" y="472.500" font-size="11" fill="#222" textLength="33" lengthAdjust="spacingAndGlyphs">1.24982</text>
<text class="x" x="1634" y="507.500" textLength="33" lengthAdjust="spacingAndGlyphs">1.24945</text>
<text class="x" x="1634" y="540.500" textLength="33" lengthAdjust="spacingAndGlyphs">1.24910</text>
<text class="x" x="1634" y="574" textLength="33" lengthAdjust="spacingAndGlyphs">1.24875</text>
<text class="x" x="1634" y="606.500" textLength="33" lengthAdjust="spacingAndGlyphs">1.24840</text>
<text class="x" x="1634" y="639.500" textLength="33" lengthAdjust="spacingAndGlyphs">1.24805</text>
<text class="x" x="1634" y="673.500" textLength="33" lengthAdjust="spacingAndGlyphs">1.24770</text>
<text class="x" x="1634" y="707" textLength="33" lengthAdjust="spacingAndGlyphs">1.24735</text>
<text class="x" x="1632" y="721" textLength="33" lengthAdjust="spacingAndGlyphs">87.3078</text>
<text class="x" x="1632" y="925" textLength="17" lengthAdjust="spacingAndGlyphs">0.00</text>
<text class="x" x="1632" y="929" textLength="31" lengthAdjust="spacingAndGlyphs">-4.1575</text>
</g>

<!-- TDI -->
<text x="9.500" y="722.500" font-size="11" fill="#e8eef4" textLength="264" lengthAdjust="spacingAndGlyphs">TDI Alerts v 61.8609 45.7140 29.5671 28.2531 31.1381 0.0000</text>
<path d="M5 733.500H1197M5 800.500H1197M5 865.500H1197" stroke="#3a5056" stroke-dasharray="4 4" fill="none"/>
<g font-size="11" font-weight="bold" fill="#5f8a9a">
<text x="1205" y="743.500">78</text><text x="1205" y="810.500">50</text><text x="1205" y="875.500">23</text>
</g>
<g fill="none" transform="translate(0,700) scale(.39541,.33333)">
<polyline vector-effect="non-scaling-stroke" stroke="#ff1818" stroke-width="1" stroke-dasharray="2 2" points="12,420 30,375 60,300 100,270 140,235 160,235 180,290 205,350 230,372 270,390 300,340 340,280 370,268 400,320 430,380 470,395 500,410 550,385 600,340 640,305 690,310 735,355 780,372 830,360 880,330 930,265 960,300 1000,350 1050,380 1110,365 1180,372 1245,350 1290,285 1340,252 1400,245 1470,270 1510,262 1568,300"/>
<polyline vector-effect="non-scaling-stroke" stroke="#90d0f0" stroke-width="1" points="12,372 30,340 60,295 100,260 130,220 160,202 330,202 380,192 410,208 445,208 500,265 570,262 640,247 710,278 780,275 850,272 915,240 960,240 1020,255 1130,252 1230,265 1250,292 1268,292 1300,270 1400,222 1470,211 1520,212 1568,220"/>
<polyline vector-effect="non-scaling-stroke" stroke="#90d0f0" stroke-width="1" points="12,490 30,488 55,506 110,500 200,488 260,478 310,440 360,408 390,410 450,440 500,445 550,440 620,430 720,430 790,422 860,406 960,408 1035,430 1090,423 1230,420 1255,412 1310,422 1370,420 1395,402 1440,396 1480,365 1530,335 1568,330"/>
<polyline vector-effect="non-scaling-stroke" stroke="#ffe800" stroke-width="1" points="12,430 30,420 60,400 100,385 130,365 150,350 200,345 260,338 300,325 360,300 430,320 500,355 550,355 590,345 640,338 690,345 730,355 790,348 860,338 910,326 950,325 1035,343 1100,340 1250,350 1300,345 1400,312 1440,306 1480,290 1530,276 1568,276"/>
<polyline vector-effect="non-scaling-stroke" stroke="#10f080" stroke-width="2" stroke-linejoin="round" points="12,375 22,355 35,320 52,222 70,275 85,292 97,297 112,205 125,182 145,215 160,280 172,378 185,372 195,355 208,385 220,390 235,368 245,370 257,396 275,360 295,318 318,268 335,268 350,246 360,250 380,325 400,370 415,372 435,385 450,430 467,367 487,420 500,420 518,362 545,362 560,325 580,320 600,315 620,298 640,275 655,325 670,285 680,290 700,350 720,402 730,398 750,330 770,370 795,408 815,330 832,300 845,362 855,362 865,325 880,300 885,275 905,236 925,275 935,290 965,370 975,365 985,330 1005,365 1018,365 1035,430 1055,370 1075,335 1095,318 1120,408 1130,408 1150,355 1170,345 1188,378 1200,378 1215,332 1245,350 1255,340 1270,262 1290,268 1300,262 1315,272 1335,245 1360,240 1380,248 1405,272 1420,275 1432,290 1450,246 1460,246 1480,278 1495,285 1510,258 1530,290 1550,345 1568,340"/>
</g>
<g fill="none" transform="translate(620,700) scale(.39541,.33333)">
<polyline vector-effect="non-scaling-stroke" stroke="#ff1818" stroke-width="1" stroke-dasharray="2 2" points="0,312 40,345 70,335 100,295 150,285 210,270 250,265 285,272 315,320 345,330 410,325 470,300 525,285 580,285 620,270 650,220 700,150 740,110 775,118 830,122 870,200 920,260 985,235 1030,270 1085,295 1115,340 1165,300 1195,260 1235,255 1290,295 1340,300 1400,385 1460,440"/>
<polyline vector-effect="non-scaling-stroke" stroke="#90d0f0" stroke-width="1" points="0,218 100,220 160,238 270,238 340,226 440,236 570,241 640,240 700,160 790,70 820,64 930,68 990,60 1080,95 1130,150 1180,195 1250,203 1320,235 1400,230 1440,216 1458,218"/>
<polyline vector-effect="non-scaling-stroke" stroke="#90d0f0" stroke-width="1" points="0,340 50,352 270,352 305,372 380,365 630,362 640,345 690,370 780,347 850,305 890,295 960,290 975,280 1000,300 1070,345 1110,375 1240,352 1300,365 1350,365 1398,405 1458,445"/>
<polyline vector-effect="non-scaling-stroke" stroke="#ffe800" stroke-width="1" points="0,276 60,285 130,290 200,295 280,295 310,302 450,297 580,303 630,300 700,260 750,228 830,190 870,182 960,176 985,175 1050,205 1130,260 1190,278 1230,278 1310,298 1355,298 1400,318 1458,330"/>
<polyline vector-effect="non-scaling-stroke" stroke="#10f080" stroke-width="2" stroke-linejoin="round" points="0,328 15,335 35,368 55,320 75,305 95,245 120,300 135,302 145,287 165,292 185,275 200,266 220,266 232,248 250,270 272,295 285,265 295,320 307,398 318,342 335,330 345,296 355,298 375,335 400,342 415,330 430,278 445,280 470,312 490,282 525,282 545,290 565,280 590,250 610,255 622,275 640,240 660,150 675,122 695,116 710,132 725,112 742,90 760,126 780,102 795,102 820,150 835,152 860,210 885,280 895,320 915,228 925,236 960,232 975,192 995,310 1005,305 1015,315 1035,258 1050,275 1070,325 1085,340 1105,375 1130,320 1140,315 1155,250 1175,250 1188,245 1205,272 1225,258 1245,330 1260,335 1283,280 1305,325 1320,325 1330,310 1345,320 1350,310 1368,380 1380,385 1398,432 1410,428 1420,408 1440,450 1448,460 1460,462"/>
</g>
<!-- TDI signals -->
<g font-size="12" font-weight="bold" fill="#ff0000" stroke="#ff0000" stroke-width=".5">
<text x="1507" y="743.500" textLength="71" lengthAdjust="spacingAndGlyphs">Strong Sell</text>
<text x="1522" y="765" textLength="51" lengthAdjust="spacingAndGlyphs">1.24982</text>
<text x="1514" y="793" textLength="64" lengthAdjust="spacingAndGlyphs">TDI Trend</text>
<text x="1501" y="815" textLength="82" lengthAdjust="spacingAndGlyphs">Strong Down</text>
</g>
<text x="1507" y="765" font-size="12" fill="#ff0000">@</text>
<path d="M1607 740h4v9l3.500-3h2.500l-7.500 11.500-7.500-11.500h2.500l2.500 3z" fill="#ff0000"/>
<path d="M1607 780h4v9l3.500-3h2.500l-7.500 11.500-7.500-11.500h2.500l2.500 3z" fill="#ff0000"/>

<!-- time axis -->
<path d="M69.500 931v3M133.500 931v3M197.500 931v3M261.500 931v3M325.500 931v3M389.500 931v3M453.500 931v3M517.500 931v3M581.500 931v3M645.500 931v3M709.500 931v3M773.500 931v3M837.500 931v3M901.500 931v3M965.500 931v3M1029.500 931v3M1093.500 931v3M1157.500 931v3M5.500 931v3" stroke="#fff"/>
<g>
<text class="x" x="4" y="944.500" textLength="47" lengthAdjust="spacingAndGlyphs">5 Aug 2021</text>
<text class="x" x="68" y="944.500" textLength="51" lengthAdjust="spacingAndGlyphs">5 Aug 10:05</text>
<text class="x" x="132" y="944.500" textLength="51" lengthAdjust="spacingAndGlyphs">5 Aug 11:25</text>
<text class="x" x="196" y="944.500" textLength="51" lengthAdjust="spacingAndGlyphs">5 Aug 12:45</text>
<text class="x" x="260" y="944.500" textLength="51" lengthAdjust="spacingAndGlyphs">5 Aug 14:05</text>
<text class="x" x="324" y="944.500" textLength="51" lengthAdjust="spacingAndGlyphs">5 Aug 15:25</text>
<text class="x" x="388" y="944.500" textLength="51" lengthAdjust="spacingAndGlyphs">5 Aug 16:45</text>
<text class="x" x="452" y="944.500" textLength="51" lengthAdjust="spacingAndGlyphs">5 Aug 18:05</text>
<text class="x" x="516" y="944.500" textLength="51" lengthAdjust="spacingAndGlyphs">5 Aug 19:25</text>
<text class="x" x="580" y="944.500" textLength="51" lengthAdjust="spacingAndGlyphs">5 Aug 20:45</text>
<text class="x" x="644" y="944.500" textLength="51" lengthAdjust="spacingAndGlyphs">5 Aug 22:05</text>
<text class="x" x="708" y="944.500" textLength="51" lengthAdjust="spacingAndGlyphs">5 Aug 23:25</text>
<text class="x" x="772" y="944.500" textLength="51" lengthAdjust="spacingAndGlyphs">6 Aug 00:45</text>
<text class="x" x="836" y="944.500" textLength="51" lengthAdjust="spacingAndGlyphs">6 Aug 02:05</text>
<text class="x" x="900" y="944.500" textLength="51" lengthAdjust="spacingAndGlyphs">6 Aug 03:25</text>
<text class="x" x="964" y="944.500" textLength="51" lengthAdjust="spacingAndGlyphs">6 Aug 04:45</text>
<text class="x" x="1028" y="944.500" textLength="51" lengthAdjust="spacingAndGlyphs">6 Aug 06:05</text>
<text class="x" x="1092" y="944.500" textLength="51" lengthAdjust="spacingAndGlyphs">6 Aug 07:25</text>
<text class="x" x="1156" y="944.500" textLength="51" lengthAdjust="spacingAndGlyphs">6 Aug 08:45</text>
</g>
<!-- activate windows -->
<text x="1353" y="923" font-size="20" fill="#6d7480" textLength="156" lengthAdjust="spacingAndGlyphs">Activate Windows</text>
<text x="1353" y="944" font-size="14.500" fill="#6d7480" textLength="255" lengthAdjust="spacingAndGlyphs">Go to PC settings to activate Windows.</text>
</svg>
</body></html>
